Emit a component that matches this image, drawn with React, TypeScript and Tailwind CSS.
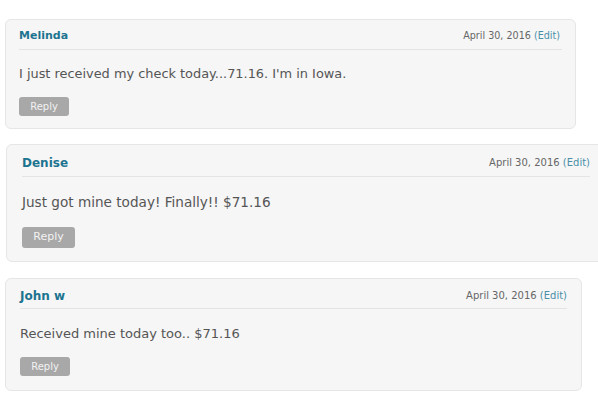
import React from "react";

export default function App() {
  const font = { fontFamily: '"DejaVu Sans", "Liberation Sans", sans-serif' };
  return (
    <div className="w-[598px] h-[406px] overflow-hidden bg-white flex flex-col" style={font}>
      {/* Card 1 */}
      <div className="mt-[19px] ml-[5px] w-[571px] h-[110px] shrink-0 rounded-[6px] border border-[#e6e6e6] bg-[#f6f6f6] pl-[13px] pr-[13px] flex flex-col">
        <div className="h-[30px] flex items-center justify-between border-b border-[#e4e4e4] pt-[4px]">
          <span className="text-[11px] font-bold text-[#1d7490]">Melinda</span>
          <span className="text-[9.6px] text-[#666] mr-[2px]">April 30, 2016 <span className="text-[#4a8fa8]">(Edit)</span></span>
        </div>
        <p className="mt-[15px] text-[12.9px] leading-[17px] text-[#555]">I just received my check today...71.16. I'm in Iowa.</p>
        <div className="mt-[11px]">
          <span className="inline-flex items-center justify-center w-[50px] h-[19px] rounded-[3px] bg-[#a8a8a8] text-[10px] text-[#f2f2f2]">Reply</span>
        </div>
      </div>

      {/* Card 2 */}
      <div className="mt-[15px] ml-[6px] w-[597px] h-[118px] shrink-0 rounded-[6px] border border-[#e6e6e6] bg-[#f6f6f6] pl-[15px] pr-[12px] flex flex-col">
        <div className="h-[32px] flex items-center justify-between border-b border-[#e4e4e4] pt-[4px]">
          <span className="text-[12px] font-bold text-[#1d7490]">Denise</span>
          <span className="text-[10px] text-[#666]">April 30, 2016 <span className="text-[#4a8fa8]">(Edit)</span></span>
        </div>
        <p className="mt-[16px] text-[13.6px] leading-[18px] text-[#555]">Just got mine today! Finally!! $71.16</p>
        <div className="mt-[12px]">
          <span className="inline-flex items-center justify-center w-[53px] h-[21px] rounded-[3px] bg-[#a8a8a8] text-[11px] text-[#f2f2f2]">Reply</span>
        </div>
      </div>

      {/* Card 3 */}
      <div className="mt-[16px] ml-[5px] w-[577px] h-[113px] shrink-0 rounded-[6px] border border-[#e6e6e6] bg-[#f6f6f6] px-[14px] flex flex-col">
        <div className="h-[30px] flex items-center justify-between border-b border-[#e4e4e4] pt-[4px]">
          <span className="text-[12px] font-bold text-[#1d7490]">John w</span>
          <span className="text-[10px] text-[#666]">April 30, 2016 <span className="text-[#4a8fa8]">(Edit)</span></span>
        </div>
        <p className="mt-[16px] text-[13px] leading-[17px] text-[#555]">Received mine today too.. $71.16</p>
        <div className="mt-[11px]">
          <span className="inline-flex items-center justify-center w-[50px] h-[19px] rounded-[3px] bg-[#a8a8a8] text-[10px] text-[#f2f2f2]">Reply</span>
        </div>
      </div>
    </div>
  );
}
